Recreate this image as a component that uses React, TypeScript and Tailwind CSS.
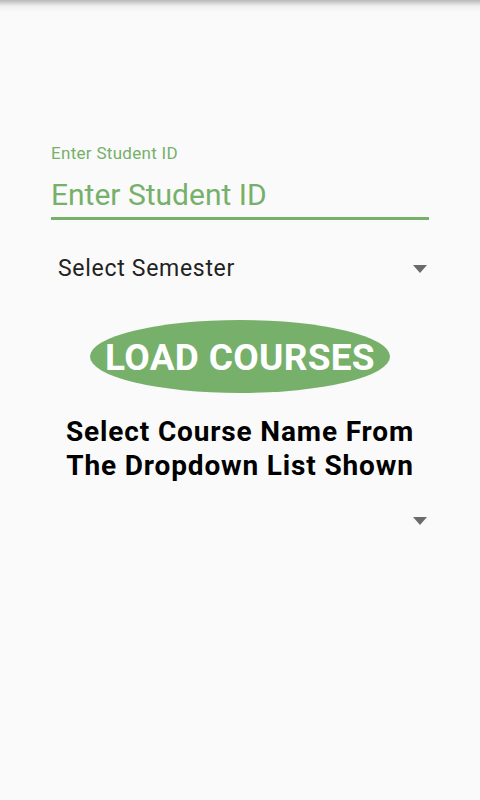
import React from 'react';

const Caret = () => (
  <svg width="14" height="8" viewBox="0 0 14 8" className="shrink-0">
    <path d="M0 0 L14 0 L7 8 Z" fill="#6b6b6b" />
  </svg>
);

export default function App() {
  return (
    <div className="relative w-[480px] h-[800px] bg-[#fafafa] overflow-hidden font-['Roboto',sans-serif]">
      {/* status bar shadow */}
      <div className="absolute top-0 left-0 right-0 h-[12px] bg-gradient-to-b from-[#b8b8b8] via-[#efefef] to-[#fafafa]" />

      <div className="flex flex-col pt-[143px] px-[51px]">
        {/* Student ID field */}
        <label className="text-[17px] leading-[20px] tracking-[0.3px] text-[#76b06a]">Enter Student ID</label>
        <div className="mt-[14px] text-[30px] leading-[36px] text-[#76b06a]">Enter Student ID</div>
        <div className="mt-[4px] h-[3px] w-[378px] bg-[#76b06a]" />

        {/* Semester spinner */}
        <div className="mt-[34px] flex items-center justify-between pl-[7px] pr-[2px] h-[30px]">
          <span className="text-[23px] leading-[30px] tracking-[0.7px] text-[#222222]">Select Semester</span>
          <Caret />
        </div>

        {/* Load button */}
        <div className="mt-[36px] flex justify-center">
          <button className="w-[300px] h-[73px] pt-[2px] rounded-[50%] bg-[#76b06a] text-white font-bold text-[37px] tracking-[0.3px]">
            LOAD COURSES
          </button>
        </div>

        {/* Heading */}
        <h1 className="mt-[22px] text-center font-bold text-[28px] leading-[34px] tracking-[0.85px] text-black">
          Select Course Name From
          <br />
          The Dropdown List Shown
        </h1>

        {/* Course spinner */}
        <div className="mt-[23px] flex items-center justify-end pr-[2px] h-[30px]">
          <Caret />
        </div>
      </div>
    </div>
  );
}
